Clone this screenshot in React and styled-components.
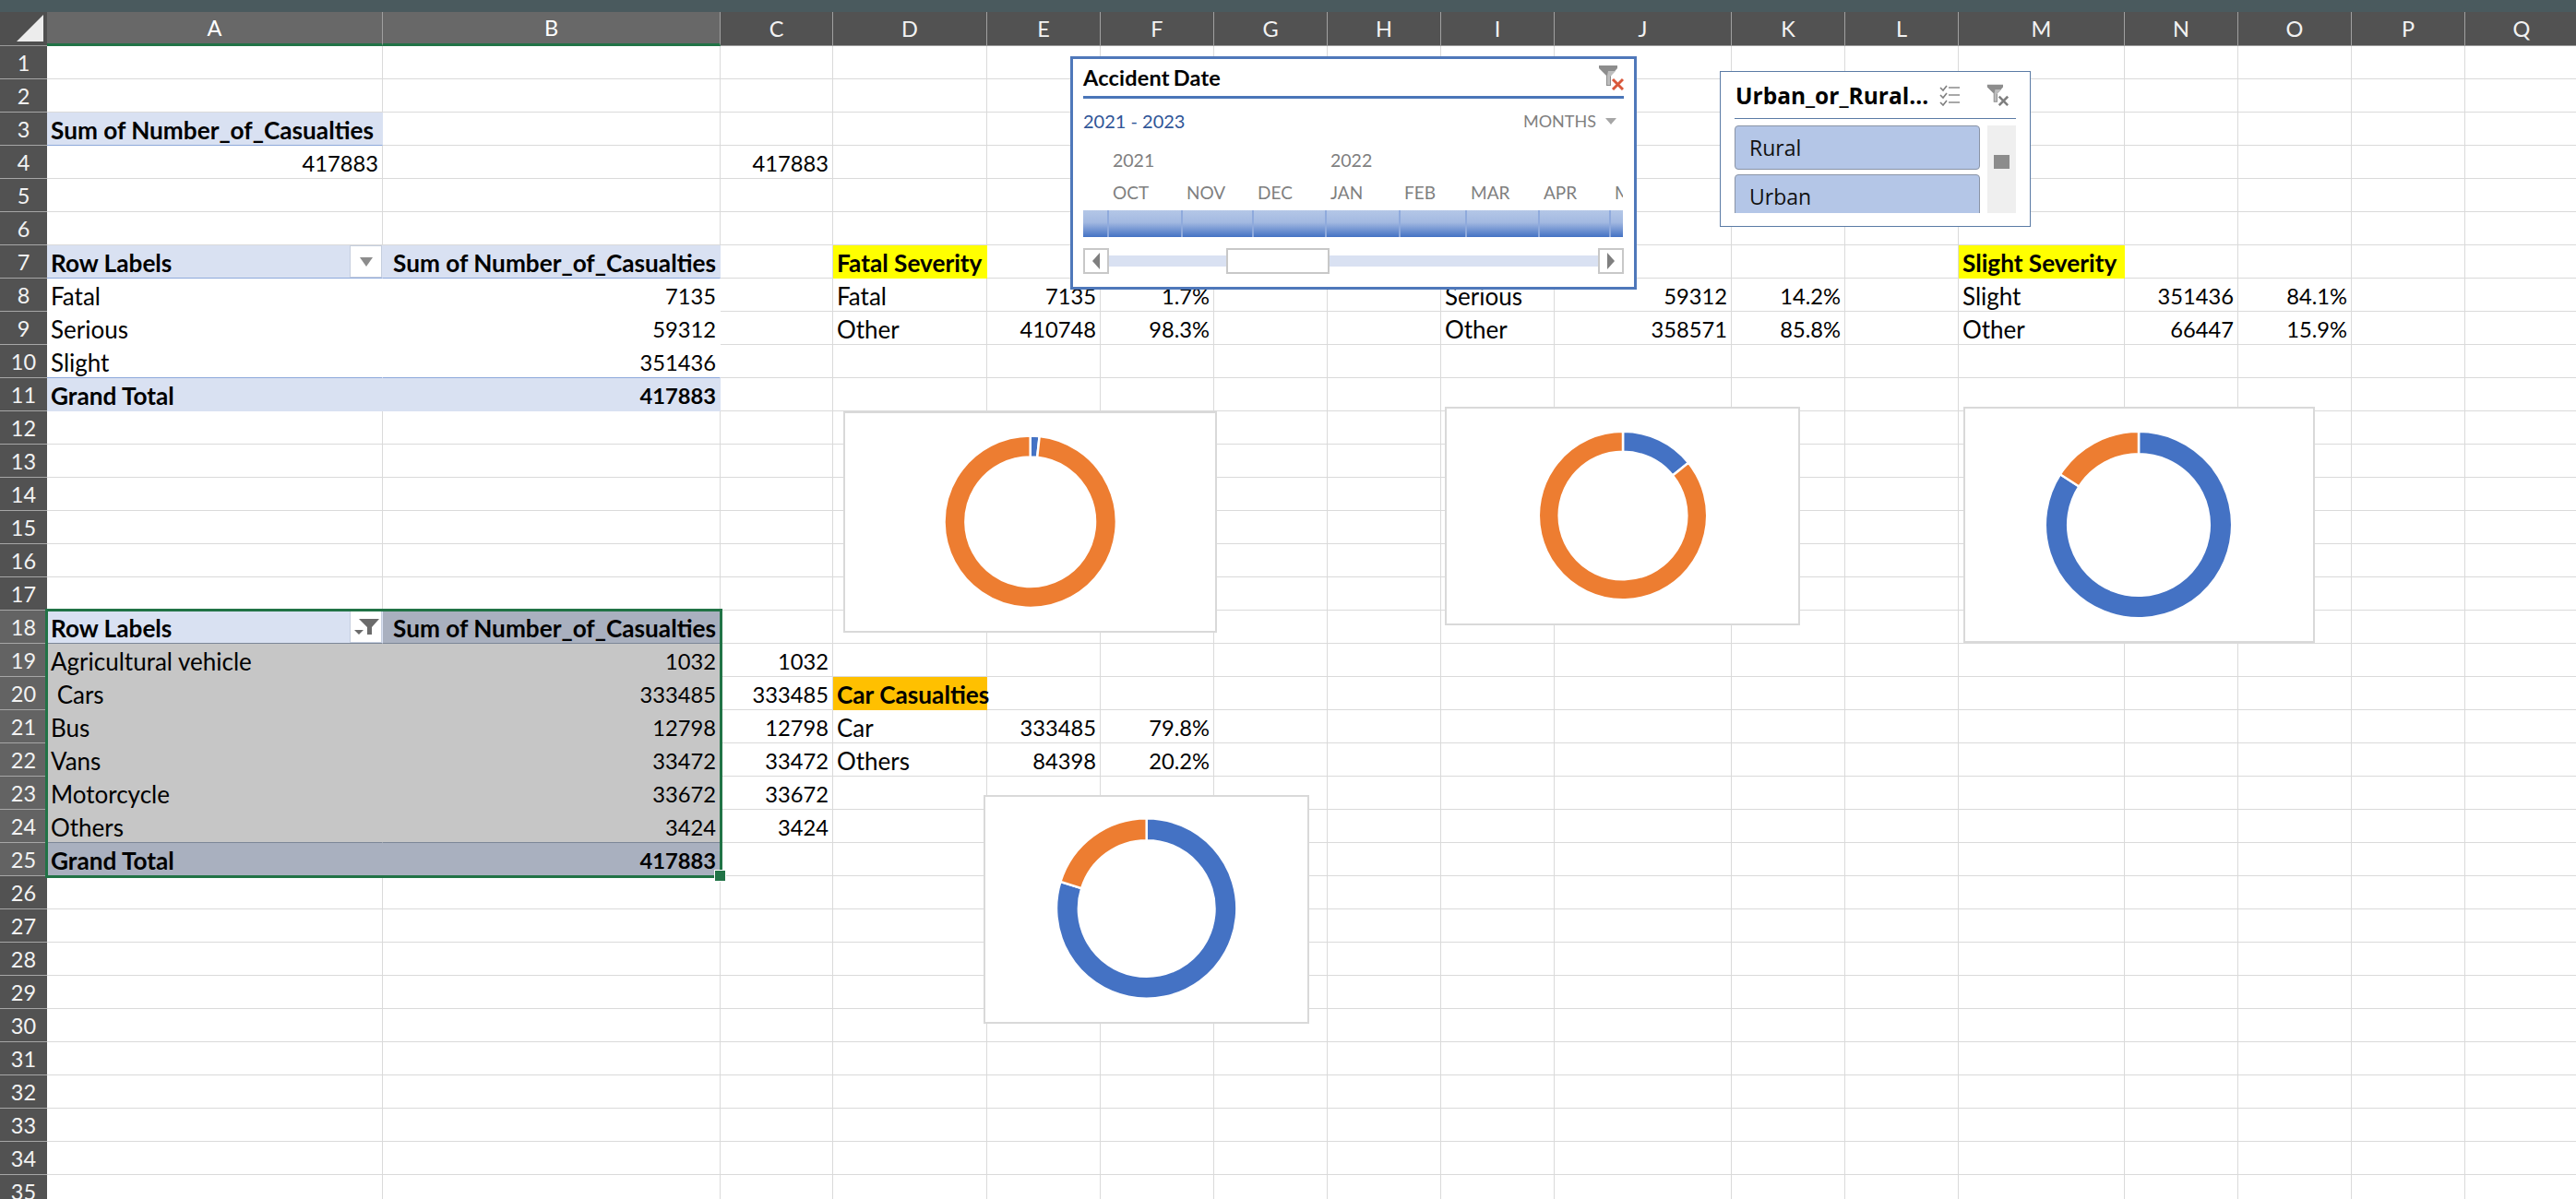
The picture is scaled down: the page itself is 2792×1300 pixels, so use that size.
import React from "react"
import styled, { createGlobalStyle } from "styled-components"

const GlobalStyle = createGlobalStyle`
  html, body {
    margin: 0;
    padding: 0;
    background: #fff;
    overflow: hidden;
  }
  body {
    font-family: Lato, "Open Sans", sans-serif;
  }
`

const COLUMNS = [
  ["A", 364], ["B", 366], ["C", 122], ["D", 167], ["E", 123], ["F", 123], ["G", 123], ["H", 123], ["I", 123],
  ["J", 192], ["K", 123], ["L", 123], ["M", 180], ["N", 123], ["O", 123], ["P", 123], ["Q", 123],
]
const ROW_COUNT = 35
const SELECTED_COLUMNS = ["A", "B"]
const SELECTED_FROM = 18
const SELECTED_TO = 25

const HEAD = "#D9E1F2"
const RULE = "#8EA9DB"
const GREY = "#C6C6C6"
const GREY_HEAD = "#A9B0BF"
const GREY_RULE = "#7C8798"
const YELLOW = "#FFFF00"
const AMBER = "#FFC000"

const num = (text, extra) => ({ text, right: true, numeric: true, ...extra })
const plain = { fill: "#fff" }
const greyCell = { fill: GREY }

const CELLS = {
  A3: { text: "Sum of Number_of_Casualties", bold: true, fill: HEAD, rule: RULE },
  A4: num("417883"),
  C4: num("417883"),
  A7: { text: "Row Labels", bold: true, fill: HEAD, rule: RULE, filter: "caret" },
  B7: { text: "Sum of Number_of_Casualties", right: true, bold: true, fill: HEAD, rule: RULE },
  D7: { text: "Fatal Severity", bold: true, fill: YELLOW },
  M7: { text: "Slight Severity", bold: true, fill: YELLOW },
  A8: { text: "Fatal", ...plain },
  B8: num("7135", plain),
  D8: { text: "Fatal" },
  E8: num("7135"),
  F8: num("1.7%"),
  I8: { text: "Serious" },
  J8: num("59312"),
  K8: num("14.2%"),
  M8: { text: "Slight" },
  N8: num("351436"),
  O8: num("84.1%"),
  A9: { text: "Serious", ...plain },
  B9: num("59312", plain),
  D9: { text: "Other" },
  E9: num("410748"),
  F9: num("98.3%"),
  I9: { text: "Other" },
  J9: num("358571"),
  K9: num("85.8%"),
  M9: { text: "Other" },
  N9: num("66447"),
  O9: num("15.9%"),
  A10: { text: "Slight", fill: "#fff", rule: RULE },
  B10: num("351436", { fill: "#fff", rule: RULE }),
  A11: { text: "Grand Total", bold: true, fill: HEAD },
  B11: num("417883", { bold: true, fill: HEAD }),
  A18: { text: "Row Labels", bold: true, fill: HEAD, rule: GREY_RULE, filter: "funnel" },
  B18: { text: "Sum of Number_of_Casualties", right: true, bold: true, fill: GREY_HEAD, rule: GREY_RULE },
  A19: { text: "Agricultural vehicle", ...greyCell },
  B19: num("1032", greyCell),
  C19: num("1032"),
  A20: { text: " Cars", ...greyCell },
  B20: num("333485", greyCell),
  C20: num("333485"),
  D20: { text: "Car Casualties", bold: true, fill: AMBER },
  A21: { text: "Bus", ...greyCell },
  B21: num("12798", greyCell),
  C21: num("12798"),
  D21: { text: "Car" },
  E21: num("333485"),
  F21: num("79.8%"),
  A22: { text: "Vans", ...greyCell },
  B22: num("33472", greyCell),
  C22: num("33472"),
  D22: { text: "Others" },
  E22: num("84398"),
  F22: num("20.2%"),
  A23: { text: "Motorcycle", ...greyCell },
  B23: num("33672", greyCell),
  C23: num("33672"),
  A24: { text: "Others", fill: GREY, rule: GREY_RULE },
  B24: num("3424", { fill: GREY, rule: GREY_RULE }),
  C24: num("3424"),
  A25: { text: "Grand Total", bold: true, fill: GREY_HEAD },
  B25: num("417883", { bold: true, fill: GREY_HEAD }),
}

const CHARTS = [
  { left: 914, top: 446, width: 405, height: 240, cx: 200.7, cy: 117.7, outer: 93.2, inner: 70.3, slices: [1.7, 98.3] },
  { left: 1566, top: 441, width: 385, height: 237, cx: 191, cy: 116, outer: 91.2, inner: 69.3, slices: [14.2, 85.8] },
  { left: 2128, top: 441, width: 381, height: 256, cx: 188, cy: 126, outer: 101.2, inner: 76.8, slices: [84.1, 15.9] },
  { left: 1066, top: 862, width: 353, height: 248, cx: 174.7, cy: 121, outer: 97.7, inner: 73.8, slices: [79.8, 20.2] },
]

const PERIODS = [
  { width: 28 },
  { width: 80, year: "2021", month: "OCT" },
  { width: 77, month: "NOV" },
  { width: 79, month: "DEC" },
  { width: 80, year: "2022", month: "JAN" },
  { width: 72, month: "FEB" },
  { width: 79, month: "MAR" },
  { width: 77, month: "APR" },
  { width: 13, month: "MAY" },
]
const periodTrack = PERIODS.map((p) => `${p.width}px`).join(" ")

const Page = styled.div`
  position: relative;
  width: 2792px;
  height: 1300px;
  overflow: hidden;
  color: #000;
`
const TitleStrip = styled.div`
  height: 13px;
  background: #4a5a5e;
`
const Sheet = styled.div`
  display: grid;
  grid-template-columns: 51px ${COLUMNS.map((c) => `${c[1]}px`).join(" ")};
  grid-template-rows: 37px repeat(${ROW_COUNT}, 36px);
`
const Corner = styled.div`
  display: flex;
  justify-content: flex-end;
  align-items: flex-end;
  padding: 0 4px 4px 0;
  box-sizing: border-box;
  background: #4f4f4f;
  border-bottom: 1px solid #9a9a9a;
`
const CornerMark = styled.div`
  width: 29px;
  height: 29px;
  background: #ececec;
  clip-path: polygon(100% 0, 100% 100%, 0 100%);
`
const ColumnHead = styled.div`
  display: flex;
  align-items: center;
  justify-content: center;
  box-sizing: border-box;
  font-size: 23.5px;
  color: ${(p) => (p.$active ? "#fff" : "#f2f2f2")};
  background: ${(p) => (p.$active ? "#686868" : "#525252")};
  border-right: 1px solid #a0a0a0;
  border-bottom: ${(p) => (p.$active ? "3px solid #217346" : "1px solid #9a9a9a")};
`
const RowHead = styled.div`
  display: flex;
  align-items: center;
  justify-content: center;
  box-sizing: border-box;
  font-size: 23.5px;
  color: #f2f2f2;
  background: ${(p) => (p.$active ? "#636363" : "#525252")};
  border-bottom: 1px solid #a6a6a6;
`
const Cell = styled.div`
  display: flex;
  align-items: center;
  justify-content: ${(p) => (p.$right ? "flex-end" : "flex-start")};
  box-sizing: border-box;
  padding: 2px 4px 0;
  min-width: 0;
  white-space: pre;
  font-size: ${(p) => (p.$numeric ? 23.7 : p.$bold ? 26.2 : 26)}px;
  font-weight: ${(p) => (p.$bold ? 700 : 400)};
  background: ${(p) => p.$fill || "transparent"};
  border-right: 1px solid ${(p) => p.$fill || "#dadada"};
  border-bottom: 1px solid ${(p) => p.$rule || p.$fill || "#dadada"};
`
const FilterButton = styled.div`
  display: flex;
  align-items: center;
  justify-content: center;
  box-sizing: border-box;
  width: 35px;
  height: 35px;
  margin: -2px -4px 0 auto;
  background: #fff;
  border: 1px solid #c5cede;
`

const Selection = styled.div`
  position: absolute;
  left: 49px;
  top: 660px;
  width: 734px;
  height: 292px;
  box-sizing: border-box;
  border: 3px solid #217346;
  pointer-events: none;
`
const SelectionHandle = styled.div`
  position: absolute;
  right: -7px;
  bottom: -7px;
  width: 11px;
  height: 11px;
  background: #217346;
  border: 1px solid #fff;
`

const ChartFrame = styled.div`
  position: absolute;
  left: ${(p) => p.$left}px;
  top: ${(p) => p.$top}px;
  width: ${(p) => p.$width}px;
  height: ${(p) => p.$height}px;
  box-sizing: border-box;
  background: #fff;
  border: 2px solid #d9d9d9;
`
const ChartSvg = styled.svg`
  display: block;
  width: 100%;
  height: 100%;
`

const Timeline = styled.div`
  position: absolute;
  left: 1160px;
  top: 61px;
  width: 614px;
  height: 253px;
  box-sizing: border-box;
  display: flex;
  flex-direction: column;
  padding: 0 11px;
  background: #fff;
  border: 3px solid #4f78ba;
`
const TimelineHeader = styled.div`
  display: flex;
  align-items: center;
  justify-content: space-between;
  flex: none;
  height: 43px;
  box-sizing: border-box;
  border-bottom: 3px solid #4a75b8;
`
const TimelineTitle = styled.div`
  font-size: 23.5px;
  font-weight: 700;
  word-spacing: -2px;
  letter-spacing: 0.2px;
`
const RangeRow = styled.div`
  display: flex;
  align-items: center;
  justify-content: space-between;
  flex: none;
  height: 48px;
  padding-right: 8px;
`
const RangeLabel = styled.div`
  font-size: 20px;
  color: #2f5597;
`
const LevelPicker = styled.div`
  display: flex;
  align-items: center;
  gap: 10px;
  font-size: 18px;
  color: #7f7f7f;
`
const Caret = styled.div`
  width: 0;
  height: 0;
  border-left: 6px solid transparent;
  border-right: 6px solid transparent;
  border-top: 7px solid #a6a6a6;
`
const PeriodGrid = styled.div`
  display: grid;
  flex: none;
  grid-template-columns: ${periodTrack};
  height: ${(p) => p.$height}px;
  margin-top: ${(p) => p.$gap || 0}px;
`
const PeriodLabel = styled.div`
  display: flex;
  align-items: center;
  padding-left: 4px;
  overflow: hidden;
  min-width: 0;
  white-space: nowrap;
  font-size: 19px;
  color: #7f7f7f;
`
const YearLabel = styled.div`
  display: flex;
  align-items: center;
  padding-left: 4px;
  font-size: 19.5px;
  color: #7f7f7f;
`
const PeriodBar = styled.div`
  box-sizing: border-box;
  background: linear-gradient(#b4c7e7 0%, #a3b9e1 45%, #4472c4 100%);
  border-right: ${(p) => (p.$last ? "none" : "2px solid #8faadc")};
`
const ScrollRow = styled.div`
  display: flex;
  flex: none;
  height: 28px;
  margin-top: 12px;
`
const ScrollButton = styled.div`
  display: flex;
  flex: none;
  align-items: center;
  justify-content: center;
  box-sizing: border-box;
  width: 28px;
  background: #fff;
  border: 2px solid #c8c8c8;
`
const ScrollTrack = styled.div`
  flex: 1;
  background: linear-gradient(transparent 8px, #d9e1f2 8px, #d9e1f2 20px, transparent 20px);
`
const ScrollThumb = styled.div`
  box-sizing: border-box;
  width: 112px;
  height: 100%;
  margin-left: 127px;
  background: #fff;
  border: 2px solid #c8c8c8;
`

const Slicer = styled.div`
  position: absolute;
  left: 1864px;
  top: 77px;
  width: 337px;
  height: 169px;
  box-sizing: border-box;
  display: flex;
  flex-direction: column;
  padding: 0 15px 0 15px;
  background: #fff;
  border: 1px solid #5b7ba5;
`
const SlicerHeader = styled.div`
  display: flex;
  align-items: center;
  flex: none;
  height: 51px;
  box-sizing: border-box;
  border-bottom: 1px solid #5b7ba5;
`
const SlicerTitle = styled.div`
  font-family: "Open Sans", sans-serif;
  font-size: 24.5px;
  font-weight: 700;
  white-space: nowrap;
  margin-left: 1px;
`
const SlicerIcon = styled.svg`
  flex: none;
  display: block;
  margin-left: ${(p) => p.$gap}px;
`
const SlicerBody = styled.div`
  display: flex;
  flex: none;
  height: 95px;
  margin-top: 7px;
  gap: 8px;
`
const SlicerItems = styled.div`
  flex: 1;
  display: flex;
  flex-direction: column;
  gap: 5px;
  overflow: hidden;
`
const SlicerItem = styled.div`
  flex: none;
  display: flex;
  align-items: center;
  box-sizing: border-box;
  height: 48px;
  padding-left: 15px;
  font-family: "Open Sans", sans-serif;
  font-size: 23px;
  color: #111;
  background: #b4c6e7;
  border: 1px solid #8a94a6;
  border-radius: 4px;
`
const SlicerScroll = styled.div`
  flex: none;
  display: flex;
  justify-content: center;
  box-sizing: border-box;
  width: 31px;
  padding-top: 32px;
  background: #efefef;
`
const SlicerThumb = styled.div`
  width: 17px;
  height: 15px;
  background: #8c8c8c;
`

const polar = (cx, cy, r, turn) => {
  const a = turn * 2 * Math.PI
  return [cx + r * Math.sin(a), cy - r * Math.cos(a)]
}

const ringSlice = (cx, cy, outer, inner, from, to) => {
  const [x1, y1] = polar(cx, cy, outer, from)
  const [x2, y2] = polar(cx, cy, outer, to)
  const [x3, y3] = polar(cx, cy, inner, to)
  const [x4, y4] = polar(cx, cy, inner, from)
  const large = to - from > 0.5 ? 1 : 0
  return `M${x1} ${y1}A${outer} ${outer} 0 ${large} 1 ${x2} ${y2}L${x3} ${y3}A${inner} ${inner} 0 ${large} 0 ${x4} ${y4}Z`
}

const DonutChart = ({ chart }) => {
  const total = chart.slices.reduce((sum, v) => sum + v, 0)
  let start = 0
  return (
    <ChartFrame $left={chart.left} $top={chart.top} $width={chart.width} $height={chart.height}>
      <ChartSvg>
        {chart.slices.map((value, index) => {
          const end = start + value / total
          const d = ringSlice(chart.cx, chart.cy, chart.outer, chart.inner, start, end)
          start = end
          return <path key={index} d={d} fill={index === 0 ? "#4472C4" : "#ED7D31"} stroke="#fff" strokeWidth="2.5" />
        })}
      </ChartSvg>
    </ChartFrame>
  )
}

const FunnelCaretIcon = () => (
  <svg width="30" height="30" viewBox="0 0 30 30">
    <path d="M7 6H29L21 15V23H16V15Z" fill="#6b6b6b" />
    <path d="M2 18H12L7 23Z" fill="#6b6b6b" />
  </svg>
)

const CaretIcon = () => (
  <svg width="16" height="12" viewBox="0 0 16 12">
    <path d="M1 1H15L8 11Z" fill="#8c8c8c" />
  </svg>
)

const ClearFilterIcon = ({ cross, size, gap }) => (
  <SlicerIcon as="svg" $gap={gap} width={size} height={size} viewBox="0 0 28 28">
    <path d="M1 1H21V4L14 12V23H9V12L1 4Z" fill="#8d8d8d" />
    <path d="M11 7H19L13 13V22H10V12Z" fill="#bdbdbd" />
    <path d="M16 16L27 27M27 16L16 27" stroke={cross} strokeWidth="3" />
  </SlicerIcon>
)

const MultiSelectIcon = () => (
  <SlicerIcon $gap={12} width="23" height="23" viewBox="0 0 23 23">
    <path d="M1 3L4 6L8 1M1 11L4 14L8 9M1 19L4 22L8 17" fill="none" stroke="#7f7f7f" strokeWidth="1.6" />
    <path d="M10 3H22M10 11H22M10 19H22" stroke="#8c8c8c" strokeWidth="1.4" />
  </SlicerIcon>
)

const ArrowIcon = ({ right }) => (
  <svg width="10" height="18" viewBox="0 0 10 18">
    <path d={right ? "M1 0L9 9L1 18Z" : "M9 0L1 9L9 18Z"} fill="#7f7f7f" />
  </svg>
)

const SheetCell = ({ spec }) => (
  <Cell $right={spec?.right} $numeric={spec?.numeric} $bold={spec?.bold} $fill={spec?.fill} $rule={spec?.rule}>
    {spec?.text}
    {spec?.filter && (
      <FilterButton>{spec.filter === "caret" ? <CaretIcon /> : <FunnelCaretIcon />}</FilterButton>
    )}
  </Cell>
)

const rowNumbers = Array.from({ length: ROW_COUNT }, (_, i) => i + 1)

export default function App() {
  return (
    <Page>
      <GlobalStyle />
      <TitleStrip />
      <Sheet>
        <Corner>
          <CornerMark />
        </Corner>
        {COLUMNS.map(([name]) => (
          <ColumnHead key={name} $active={SELECTED_COLUMNS.includes(name)}>
            {name}
          </ColumnHead>
        ))}
        {rowNumbers.map((row) => (
          <React.Fragment key={row}>
            <RowHead $active={row >= SELECTED_FROM && row <= SELECTED_TO}>{row}</RowHead>
            {COLUMNS.map(([name]) => (
              <SheetCell key={name} spec={CELLS[`${name}${row}`]} />
            ))}
          </React.Fragment>
        ))}
      </Sheet>

      <Selection>
        <SelectionHandle />
      </Selection>

      {CHARTS.map((chart) => (
        <DonutChart key={chart.left} chart={chart} />
      ))}

      <Timeline>
        <TimelineHeader>
          <TimelineTitle>Accident Date</TimelineTitle>
          <ClearFilterIcon cross="#d9583b" size={28} gap={0} />
        </TimelineHeader>
        <RangeRow>
          <RangeLabel>2021 - 2023</RangeLabel>
          <LevelPicker>
            MONTHS
            <Caret />
          </LevelPicker>
        </RangeRow>
        <PeriodGrid $height={36}>
          {PERIODS.map((p, i) => (
            <YearLabel key={i}>{p.year}</YearLabel>
          ))}
        </PeriodGrid>
        <PeriodGrid $height={34}>
          {PERIODS.map((p, i) => (
            <PeriodLabel key={i}>{p.month}</PeriodLabel>
          ))}
        </PeriodGrid>
        <PeriodGrid $height={29} $gap={3}>
          {PERIODS.map((p, i) => (
            <PeriodBar key={i} $last={i === PERIODS.length - 1} />
          ))}
        </PeriodGrid>
        <ScrollRow>
          <ScrollButton>
            <ArrowIcon />
          </ScrollButton>
          <ScrollTrack>
            <ScrollThumb />
          </ScrollTrack>
          <ScrollButton>
            <ArrowIcon right />
          </ScrollButton>
        </ScrollRow>
      </Timeline>

      <Slicer>
        <SlicerHeader>
          <SlicerTitle>Urban_or_Rural...</SlicerTitle>
          <MultiSelectIcon />
          <ClearFilterIcon cross="#7f7f7f" size={24} gap={28} />
        </SlicerHeader>
        <SlicerBody>
          <SlicerItems>
            <SlicerItem>Rural</SlicerItem>
            <SlicerItem>Urban</SlicerItem>
          </SlicerItems>
          <SlicerScroll>
            <SlicerThumb />
          </SlicerScroll>
        </SlicerBody>
      </Slicer>
    </Page>
  )
}
